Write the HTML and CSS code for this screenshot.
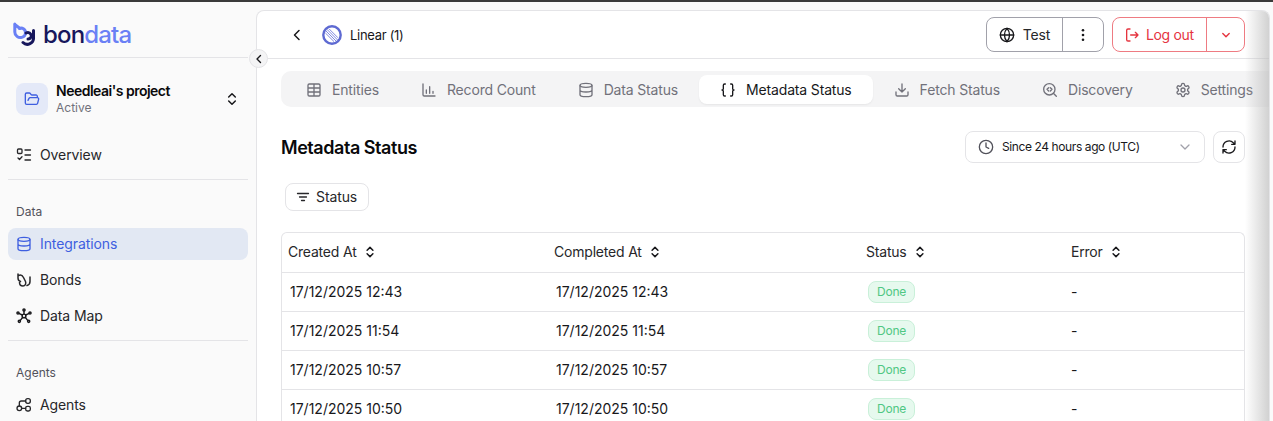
FILE: index.html
```html
<!DOCTYPE html>
<html lang="en">
<head>
<meta charset="utf-8">
<title>Metadata Status</title>
<link rel="stylesheet" href="styles.css">
</head>
<body>
<div class="topline"></div>
<div class="app">
  <aside class="sidebar">
    <div class="brand">
      <svg class="logo" width="24" height="24" viewBox="0 0 24 24" fill="none" stroke-width="3" stroke-linecap="round">
        <path d="M1.800 2.500 7 6.500M1.800 2V10a5.600 5.600 0 0 0 7 5.400 4.800 4.800 0 0 0 .5-9.200 5 5 0 0 0-3 .2" stroke="#6a80f5"/>
        <path d="M20.500 8.500V15.500a6.200 6.200 0 0 1-10.500 5" stroke="#17175c"/>
        <path d="M13 11a4 4 0 0 1 5 1.500c1 2-.5 4.500-3 4.500" stroke="#17175c"/>
      </svg>
      <span class="wordmark">bon<span class="wordmark-light">data</span></span>
    </div>
    <div class="collapse">
      <svg width="12" height="12" viewBox="0 0 12 12" fill="none" stroke="#18181b" stroke-width="1.400" stroke-linecap="round" stroke-linejoin="round"><path d="M7.500 2.500 4 6l3.500 3.500"/></svg>
    </div>
    <div class="project">
      <div class="project-tile">
        <svg width="16" height="16" viewBox="0 0 24 24" fill="none" stroke="#3f5fe0" stroke-width="2" stroke-linecap="round" stroke-linejoin="round"><path d="M6 14l1.500-2.900A2 2 0 0 1 9.200 10H20a2 2 0 0 1 1.900 2.500l-1.500 6A2 2 0 0 1 18.500 20H4a2 2 0 0 1-2-2V5a2 2 0 0 1 2-2h3.900a2 2 0 0 1 1.700.9l.8 1.200a2 2 0 0 0 1.700.9H18a2 2 0 0 1 2 2v2"/></svg>
      </div>
      <div class="project-text">
        <div class="project-name">Needleai's project</div>
        <div class="project-state">Active</div>
      </div>
      <svg class="updown" width="16" height="16" viewBox="0 0 16 16" fill="none" stroke="#18181b" stroke-width="1.500" stroke-linecap="round" stroke-linejoin="round"><path d="M4.700 6 8 2.700 11.300 6M4.700 10 8 13.300 11.300 10"/></svg>
    </div>
    <a class="nav-item">
      <svg width="16" height="16" viewBox="0 0 16 16" fill="none" stroke="#27272a" stroke-width="1.300" stroke-linecap="round" stroke-linejoin="round"><rect x="1.500" y="2" width="4.500" height="4.500" rx="1"/><path d="M2 11l1.500 1.500L6 9.800M9 3h5.500M9 8h5.500M9 13h5.500"/></svg>
      Overview
    </a>
    <div class="divider divider-overview"></div>
    <div class="section-label label-data">Data</div>
    <a class="nav-item nav-active">
      <svg width="16" height="16" viewBox="0 0 24 24" fill="none" stroke="#3f5fe0" stroke-width="2"><ellipse cx="12" cy="5" rx="9" ry="3"/><path d="M3 5v14c0 1.700 4 3 9 3s9-1.300 9-3V5M3 12c0 1.700 4 3 9 3s9-1.300 9-3"/></svg>
      Integrations
    </a>
    <a class="nav-item nav-gap">
      <svg width="16" height="16" viewBox="0 0 16 16" fill="none" stroke="#27272a" stroke-width="1.500" stroke-linecap="round" stroke-linejoin="round"><path d="M2 2v4c0 2 1 3 2.500 3.500M2.500 3.500c2-1 4 0 5 2l2 4c1 2.500-.5 4.500-2.500 4.500s-3.500-1.500-3.500-3.500"/><path d="M14 5v4.500c0 2-1 3.500-3 4"/></svg>
      Bonds
    </a>
    <a class="nav-item nav-gap">
      <svg width="16" height="16" viewBox="0 0 24 24" fill="none" stroke="#18181b" stroke-width="2.200" stroke-linecap="round"><circle cx="12" cy="12" r="2.800"/><circle cx="12" cy="3" r="1.600"/><circle cx="3" cy="7.500" r="1.600"/><circle cx="21" cy="7.500" r="1.600"/><circle cx="5" cy="20" r="1.600"/><circle cx="19" cy="20" r="1.600"/><path d="M12 5v4M5 8.500l4.500 2M19 8.500l-4.500 2M6.500 18.500l3.500-4.500M17.500 18.500 14 14"/></svg>
      Data Map
    </a>
    <div class="divider divider-map"></div>
    <div class="section-label label-agents">Agents</div>
    <a class="nav-item nav-agents">
      <svg width="16" height="16" viewBox="0 0 24 24" fill="none" stroke="#27272a" stroke-width="2" stroke-linecap="round" stroke-linejoin="round"><circle cx="5" cy="17" r="3.500"/><rect x="14.500" y="2.500" width="7" height="7" rx="3"/><rect x="14.500" y="14" width="7" height="7" rx="2.500"/><path d="M8.500 17h6M5 13.500V9a3 3 0 0 1 3-3h6.500"/></svg>
      Agents
    </a>
  </aside>

  <main class="panel">
    <header class="panel-header">
      <svg class="back" width="16" height="16" viewBox="0 0 16 16" fill="none" stroke="#18181b" stroke-width="1.500" stroke-linecap="round" stroke-linejoin="round"><path d="M10 3.500 5.500 8l4.500 4.500"/></svg>
      <svg class="linear-mark" width="20" height="20" viewBox="0 0 20 20" fill="none">
        <circle cx="10" cy="10" r="8.700" stroke="#5e6ad2" stroke-width="2.400"/>
        <path d="M3.400 8 12 16.600M3.800 5.800 14.200 16.200M5 4.400 15.600 15M7 3.800l9 9" stroke="#7f89e0" stroke-width="1"/>
      </svg>
      <span class="crumb">Linear (1)</span>
      <div class="header-actions">
        <div class="btn-group">
          <button class="btn-part btn-test">
            <svg width="16" height="16" viewBox="0 0 24 24" fill="none" stroke="#18181b" stroke-width="2" stroke-linecap="round"><circle cx="12" cy="12" r="10"/><path d="M2 12h20M12 2a15 15 0 0 1 0 20 15 15 0 0 1 0-20"/></svg>
            Test
          </button>
          <button class="btn-part btn-more">
            <svg width="16" height="16" viewBox="0 0 16 16" fill="#18181b"><circle cx="8" cy="3.300" r="1.300"/><circle cx="8" cy="8" r="1.300"/><circle cx="8" cy="12.700" r="1.300"/></svg>
          </button>
        </div>
        <div class="btn-group btn-group-danger">
          <button class="btn-part btn-logout">
            <svg width="16" height="16" viewBox="0 0 24 24" fill="none" stroke="#e5343f" stroke-width="2" stroke-linecap="round" stroke-linejoin="round"><path d="M9 3H6a2 2 0 0 0-2 2v14a2 2 0 0 0 2 2h3M21 12H10M17 8l4 4-4 4"/></svg>
            Log out
          </button>
          <button class="btn-part btn-caret">
            <svg width="12" height="12" viewBox="0 0 12 12" fill="none" stroke="#e5343f" stroke-width="1.400" stroke-linecap="round" stroke-linejoin="round"><path d="M2.800 4.500 6 7.700l3.200-3.200"/></svg>
          </button>
        </div>
      </div>
    </header>

    <nav class="tabs">
      <a class="tab">
        <svg width="16" height="16" viewBox="0 0 24 24" fill="none" stroke="#71717a" stroke-width="2"><rect x="3" y="3" width="18" height="18" rx="2"/><path d="M3 9h18M3 15h18M12 3v18"/></svg>
        Entities
      </a>
      <a class="tab">
        <svg width="16" height="16" viewBox="0 0 24 24" fill="none" stroke="#71717a" stroke-width="2" stroke-linecap="round"><path d="M3 3v16a2 2 0 0 0 2 2h16M8 17v-5M13 17V7M18 17v-3"/></svg>
        Record Count
      </a>
      <a class="tab">
        <svg width="16" height="16" viewBox="0 0 24 24" fill="none" stroke="#71717a" stroke-width="2"><ellipse cx="12" cy="5" rx="9" ry="3"/><path d="M3 5v14c0 1.700 4 3 9 3s9-1.300 9-3V5M3 12c0 1.700 4 3 9 3s9-1.300 9-3"/></svg>
        Data Status
      </a>
      <a class="tab tab-active">
        <svg width="16" height="16" viewBox="0 0 24 24" fill="none" stroke="#18181b" stroke-width="2" stroke-linecap="round" stroke-linejoin="round"><path d="M8 3H7a2 2 0 0 0-2 2v5a2 2 0 0 1-2 2 2 2 0 0 1 2 2v5a2 2 0 0 0 2 2h1M16 21h1a2 2 0 0 0 2-2v-5a2 2 0 0 1 2-2 2 2 0 0 1-2-2V5a2 2 0 0 0-2-2h-1"/></svg>
        Metadata Status
      </a>
      <a class="tab">
        <svg width="16" height="16" viewBox="0 0 24 24" fill="none" stroke="#71717a" stroke-width="2" stroke-linecap="round" stroke-linejoin="round"><path d="M21 15v4a2 2 0 0 1-2 2H5a2 2 0 0 1-2-2v-4M7 10l5 5 5-5M12 15V3"/></svg>
        Fetch Status
      </a>
      <a class="tab">
        <svg width="16" height="16" viewBox="0 0 24 24" fill="none" stroke="#71717a" stroke-width="2" stroke-linecap="round" stroke-linejoin="round"><circle cx="11" cy="11" r="8.500"/><path d="M21.500 21.500 17 17M10 8.500 7.500 11l2.500 2.500M12.500 8.500 15 11l-2.500 2.500"/></svg>
        Discovery
      </a>
      <a class="tab">
        <svg width="16" height="16" viewBox="0 0 24 24" fill="none" stroke="#71717a" stroke-width="2" stroke-linecap="round" stroke-linejoin="round"><path d="M12.220 2h-.44a2 2 0 0 0-2 2v.18a2 2 0 0 1-1 1.730l-.43.25a2 2 0 0 1-2 0l-.15-.08a2 2 0 0 0-2.730.73l-.22.38a2 2 0 0 0 .73 2.730l.15.100a2 2 0 0 1 1 1.720v.51a2 2 0 0 1-1 1.740l-.15.090a2 2 0 0 0-.73 2.730l.22.380a2 2 0 0 0 2.730.730l.15-.080a2 2 0 0 1 2 0l.43.250a2 2 0 0 1 1 1.730V20a2 2 0 0 0 2 2h.44a2 2 0 0 0 2-2v-.18a2 2 0 0 1 1-1.730l.43-.25a2 2 0 0 1 2 0l.15.080a2 2 0 0 0 2.730-.730l.22-.390a2 2 0 0 0-.73-2.730l-.15-.080a2 2 0 0 1-1-1.740v-.5a2 2 0 0 1 1-1.740l.15-.090a2 2 0 0 0 .73-2.730l-.22-.380a2 2 0 0 0-2.730-.730l-.15.080a2 2 0 0 1-2 0l-.43-.250a2 2 0 0 1-1-1.730V4a2 2 0 0 0-2-2z"/><circle cx="12" cy="12" r="3"/></svg>
        Settings
      </a>
    </nav>

    <section class="title-row">
      <h1 class="page-title">Metadata Status</h1>
      <div class="range-select">
        <svg width="16" height="16" viewBox="0 0 24 24" fill="none" stroke="#52525b" stroke-width="2" stroke-linecap="round" stroke-linejoin="round"><circle cx="12" cy="12" r="10"/><path d="M12 6v6l4 2"/></svg>
        <span class="range-text">Since 24 hours ago (UTC)</span>
        <svg class="range-caret" width="14" height="14" viewBox="0 0 14 14" fill="none" stroke="#a1a1aa" stroke-width="1.300" stroke-linecap="round" stroke-linejoin="round"><path d="M3 5l4 4 4-4"/></svg>
      </div>
      <button class="refresh">
        <svg width="16" height="16" viewBox="0 0 24 24" fill="none" stroke="#18181b" stroke-width="2" stroke-linecap="round" stroke-linejoin="round"><path d="M3 12a9 9 0 0 1 15.500-6.300L21 8M21 3v5h-5M21 12a9 9 0 0 1-15.500 6.300L3 16M8 16H3v5"/></svg>
      </button>
    </section>

    <button class="filter">
      <svg width="14" height="14" viewBox="0 0 14 14" fill="none" stroke="#27272a" stroke-width="1.300" stroke-linecap="round"><path d="M1.500 3.500h11M3.500 7h7M5.500 10.500h3"/></svg>
      Status
    </button>

    <table class="data-table">
      <thead>
        <tr>
          <th class="col-created"><span class="th-inner">Created At <svg width="14" height="14" viewBox="0 0 16 16" fill="none" stroke="#18181b" stroke-width="1.700" stroke-linecap="round" stroke-linejoin="round"><path d="M4.700 6 8 2.700 11.300 6M4.700 10 8 13.300 11.300 10"/></svg></span></th>
          <th class="col-completed"><span class="th-inner">Completed At <svg width="14" height="14" viewBox="0 0 16 16" fill="none" stroke="#18181b" stroke-width="1.700" stroke-linecap="round" stroke-linejoin="round"><path d="M4.700 6 8 2.700 11.300 6M4.700 10 8 13.300 11.300 10"/></svg></span></th>
          <th class="col-status"><span class="th-inner">Status <svg width="14" height="14" viewBox="0 0 16 16" fill="none" stroke="#18181b" stroke-width="1.700" stroke-linecap="round" stroke-linejoin="round"><path d="M4.700 6 8 2.700 11.300 6M4.700 10 8 13.300 11.300 10"/></svg></span></th>
          <th class="col-error"><span class="th-inner">Error <svg width="14" height="14" viewBox="0 0 16 16" fill="none" stroke="#18181b" stroke-width="1.700" stroke-linecap="round" stroke-linejoin="round"><path d="M4.700 6 8 2.700 11.300 6M4.700 10 8 13.300 11.300 10"/></svg></span></th>
        </tr>
      </thead>
      <tbody>
        <tr><td>17/12/2025 12:43</td><td>17/12/2025 12:43</td><td><span class="badge">Done</span></td><td class="cell-error">-</td></tr>
        <tr><td>17/12/2025 11:54</td><td>17/12/2025 11:54</td><td><span class="badge">Done</span></td><td class="cell-error">-</td></tr>
        <tr><td>17/12/2025 10:57</td><td>17/12/2025 10:57</td><td><span class="badge">Done</span></td><td class="cell-error">-</td></tr>
        <tr><td>17/12/2025 10:50</td><td>17/12/2025 10:50</td><td><span class="badge">Done</span></td><td class="cell-error">-</td></tr>
      </tbody>
    </table>
    <div class="edge-fade"></div>
  </main>
</div>
</body>
</html>
```
FILE: styles.css
```css
* { box-sizing: border-box; }
html, body { margin: 0; height: 100%; overflow: hidden; }
body {
  font-family: Inter, "Liberation Sans", sans-serif;
  font-size: 14px;
  color: #18181b;
  background: #fafafa;
}
svg { display: block; flex: none; }
button { font: inherit; color: inherit; background: none; border: 0; padding: 0; }

.topline { height: 2px; background: #3a3a3a; }
.app { display: flex; height: 419px; }

.sidebar { position: relative; width: 256px; flex: none; padding: 0 8px; }
.brand {
  height: 56px; display: flex; align-items: center; gap: 6px;
  padding: 8px 0 0 5px; border-bottom: 1px solid #e4e4e7;
}
.wordmark { margin-top: 2px; font-size: 24px; font-weight: 500; letter-spacing: -.85px; color: #17175c; line-height: 1; }
.wordmark-light { color: #6a80f5; }
.collapse {
  position: absolute; left: 249px; top: 47px; width: 19px; height: 19px;
  border-radius: 50%; background: #f4f4f5; border: 1px solid #e4e4e7;
  display: flex; align-items: center; justify-content: center; z-index: 3;
}
.project { display: flex; align-items: center; margin-top: 25px; padding: 0 8px; height: 32px; gap: 8px; }
.project-tile {
  width: 32px; height: 32px; border-radius: 8px; background: #e4e9f8;
  display: flex; align-items: center; justify-content: center; flex: none;
}
.project-text { flex: 1; }
.project-name { font-size: 14px; font-weight: 600; line-height: 16px; letter-spacing: -.5px; color: #09090b; }
.project-state { margin-top: 1px; font-size: 12px; line-height: 16px; color: #71717a; }

.nav-item {
  display: flex; align-items: center; gap: 8px; height: 32px; padding: 0 8px;
  border-radius: 8px; color: #27272a; line-height: 20px; letter-spacing: -.1px;
}
.project + .nav-item { margin-top: 24px; }
.nav-active { background: #e2e8f3; color: #3f5fe0; }
.nav-gap { margin-top: 4px; }
.nav-agents { margin-top: 8px; }
.divider { height: 1px; background: #e4e4e7; }
.divider-overview { margin-top: 8px; }
.divider-map { margin-top: 8px; }
.section-label { font-size: 12px; line-height: 16px; color: #52525b; padding: 0 8px; }
.label-data { margin-top: 24px; margin-bottom: 8px; }
.label-agents { margin-top: 24px; }

.panel {
  position: relative; flex: none; width: 1014px; height: 419px; margin: 8px 0 0;
  background: #fff; border: 1px solid #e4e4e7; border-bottom: 0; border-radius: 8px 8px 0 0;
  padding: 0 0 0 24px; overflow: hidden;
}
.panel-header {
  display: flex; align-items: center; height: 48px; margin-left: -24px;
  padding: 0 24px 0 32px; border-bottom: 1px solid #e4e4e7;
}
.linear-mark { margin-left: 17px; }
.crumb { margin-left: 8px; font-size: 13px; letter-spacing: -.3px; }
.header-actions { margin-left: auto; display: flex; gap: 8px; }
.btn-group {
  display: flex; height: 35px; border: 1px solid #a1a1aa; border-radius: 8px; background: #fff;
}
.btn-part { display: flex; align-items: center; justify-content: center; height: 100%; }
.btn-test { width: 76px; gap: 8px; border-right: 1px solid #a1a1aa; color: #27272a; letter-spacing: -.1px; }
.btn-more { width: 40px; }
.btn-group-danger { border-color: #ee7b82; color: #e5343f; }
.btn-logout { width: 94px; gap: 6px; padding-left: 11px; justify-content: flex-start; border-right: 1px solid #ee7b82; letter-spacing: -.35px; }
.btn-caret { width: 37px; }

.tabs {
  display: flex; height: 36px; margin-top: 12px; padding: 4px 0 3px 4px;
  background: #f4f4f5; border-radius: 10px 0 0 10px; white-space: nowrap; letter-spacing: -.16px;
}
.tab {
  display: flex; align-items: center; gap: 10px; padding: 0 21px; flex: none;
  border-radius: 8px; color: #71717a;
}
.tab-active { background: #fff; color: #18181b; box-shadow: 0 1px 2px rgba(0,0,0,.06); }

.title-row { display: flex; align-items: center; height: 32px; margin-top: 24px; padding-right: 24px; }
.page-title { margin: 2px 0 0; flex: 1; font-size: 18px; font-weight: 600; line-height: 28px; letter-spacing: -.45px; color: #09090b; }
.range-select {
  display: flex; align-items: center; width: 240px; height: 32px; padding: 0 12px;
  border: 1px solid #e4e4e7; border-radius: 8px; background: #fff;
}
.range-text { flex: 1; margin: -2px 0 0 8px; font-size: 12px; letter-spacing: -.4px; color: #18181b; }
.refresh {
  display: flex; align-items: center; justify-content: center;
  width: 32px; height: 32px; margin-left: 8px; border: 1px solid #e4e4e7; border-radius: 8px;
}
.filter {
  display: flex; align-items: center; gap: 6px; height: 28px; margin: 20px 0 0 4px; padding: 0 11px 0 10px;
  border: 1px solid #e4e4e7; border-radius: 8px; background: #fff; color: #27272a; line-height: 20px; letter-spacing: -.1px;
}

.data-table {
  width: 964px; margin-top: 21px; border-collapse: separate; border-spacing: 0; table-layout: fixed;
  border-top: 1px solid #e4e4e7; border-left: 1px solid #e4e4e7; border-right: 1px solid #e4e4e7;
  border-radius: 6px 6px 0 0;
}
.col-created { width: 266px; }
.col-completed { width: 312px; }
.col-status { width: 205px; }
.col-error { width: 179px; }
.data-table th {
  height: 40px; padding: 0 6px 2px; font-weight: 400; text-align: left;
  border-bottom: 1px solid #e4e4e7; color: #27272a; letter-spacing: -.2px;
}
.th-inner { display: flex; align-items: center; gap: 6px; }
.data-table td {
  height: 39px; padding: 0 8px 1px; border-bottom: 1px solid #e4e4e7; color: #18181b;
}
.data-table .cell-error { padding-left: 6px; }
.badge {
  display: inline-flex; align-items: center; height: 22px; padding: 0 8px; border-radius: 8px;
  background: #e6f9ee; border: 1px solid #c9f0d9; color: #4fc783; font-size: 12px; letter-spacing: -.2px;
}
.edge-fade {
  position: absolute; right: 0; top: 0; bottom: 0; width: 24px;
  background: linear-gradient(to right, rgba(255,255,255,0), rgba(190,190,190,.7));
  pointer-events: none;
}
```
